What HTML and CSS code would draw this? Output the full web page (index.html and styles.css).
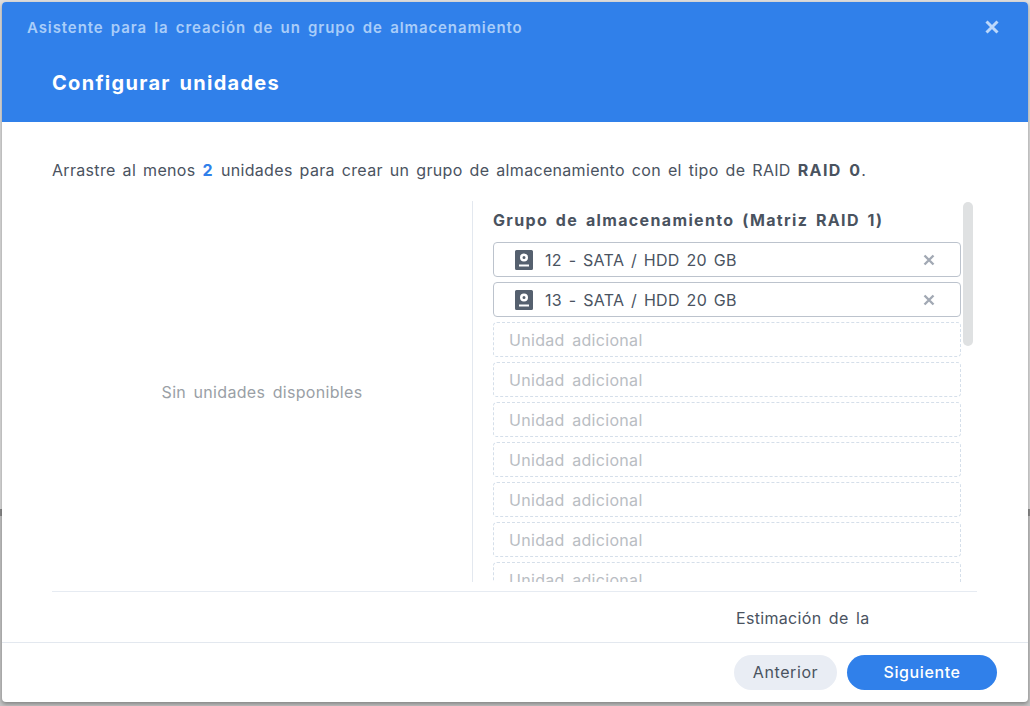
FILE: index.html
```html
<!DOCTYPE html>
<html lang="es">
<head>
<meta charset="utf-8">
<title>Asistente</title>
<link rel="stylesheet" href="styles.css">
</head>
<body>
<div class="dialog">
  <header class="head">
    <div class="top">
      <span class="wizard">Asistente para la creación de un grupo de almacenamiento</span>
      <svg class="close" width="14" height="14" viewBox="0 0 14 14"><path d="M1.5 1.5l11 11M12.5 1.5l-11 11" stroke="currentColor" stroke-width="3" fill="none"/></svg>
    </div>
    <h1 class="title">Configurar unidades</h1>
  </header>
  <main class="body">
    <p class="intro">Arrastre al menos <b class="num">2</b> unidades para crear un grupo de almacenamiento con el tipo de RAID <b>RAID 0</b>.</p>
    <div class="columns">
      <div class="avail">Sin unidades disponibles</div>
      <div class="group">
        <div class="scroll">
          <h2 class="gtitle">Grupo de almacenamiento (Matriz RAID 1)</h2>
          <div class="drive">
            <svg class="hdd" width="18" height="20" viewBox="0 0 18 20"><path fill-rule="evenodd" d="M1.5 0h15A1.5 1.5 0 0 1 18 1.500v17a1.500 1.500 0 0 1-1.500 1.500h-15A1.500 1.500 0 0 1 0 18.500v-17A1.500 1.500 0 0 1 1.500 0zM9 3.500a4 4 0 1 0 0 8 4 4 0 0 0 0-8zM9 6a1.500 1.500 0 1 1 0 3 1.500 1.500 0 0 1 0-3zM4 14.500v2h10v-2z"/></svg>
            <span class="dname">12 - SATA / HDD 20 GB</span>
            <svg class="rm" width="12" height="12" viewBox="0 0 12 12"><path d="M1.500 1.500l9 9M10.500 1.500l-9 9" stroke="currentColor" stroke-width="2.400" fill="none"/></svg>
          </div>
          <div class="drive">
            <svg class="hdd" width="18" height="20" viewBox="0 0 18 20"><path fill-rule="evenodd" d="M1.5 0h15A1.5 1.5 0 0 1 18 1.500v17a1.500 1.500 0 0 1-1.500 1.500h-15A1.500 1.500 0 0 1 0 18.500v-17A1.500 1.500 0 0 1 1.500 0zM9 3.500a4 4 0 1 0 0 8 4 4 0 0 0 0-8zM9 6a1.500 1.500 0 1 1 0 3 1.500 1.500 0 0 1 0-3zM4 14.500v2h10v-2z"/></svg>
            <span class="dname">13 - SATA / HDD 20 GB</span>
            <svg class="rm" width="12" height="12" viewBox="0 0 12 12"><path d="M1.500 1.500l9 9M10.500 1.500l-9 9" stroke="currentColor" stroke-width="2.400" fill="none"/></svg>
          </div>
          <div class="slot">Unidad adicional</div>
          <div class="slot">Unidad adicional</div>
          <div class="slot">Unidad adicional</div>
          <div class="slot">Unidad adicional</div>
          <div class="slot">Unidad adicional</div>
          <div class="slot">Unidad adicional</div>
          <div class="slot">Unidad adicional</div>
        </div>
        <div class="thumb"></div>
      </div>
    </div>
    <div class="estimate"><span class="est">Estimación de la</span></div>
  </main>
  <footer class="foot">
    <button class="btn prev">Anterior</button>
    <button class="btn next">Siguiente</button>
  </footer>
</div>
</body>
</html>
```
FILE: styles.css
```css
* { box-sizing: border-box; }
html, body { height: 100%; }
body {
  margin: 0;
  height: 706px;
  overflow: hidden;
  background: linear-gradient(#dedede 0 509px, #8c8c8c 509px 516px, #c4c4c4 516px);
  padding: 2px 2px 4px 2px;
  font-family: Inter, sans-serif;
  color: #4a535f;
  font-size: 16px;
  letter-spacing: .32px;
  word-spacing: 2.6px;
}
.dialog {
  height: 700px;
  background: #fff;
  border-radius: 4px;
  display: flex;
  flex-direction: column;
  overflow: hidden;
  box-shadow: 0 2px 4px rgba(0,0,0,.35);
}
.head {
  height: 120px;
  flex: none;
  background: #3080ea;
  color: #fff;
  padding: 0 29px 0 25px;
}
.top {
  height: 50px;
  display: flex;
  align-items: center;
  justify-content: space-between;
}
.wizard {
  font-size: 15px;
  font-weight: 600;
  color: #a9cdf9;
  letter-spacing: .9px;
}
.close { color: #bcd8fb; }
.title {
  margin: 0 0 0 25px;
  font-size: 20px;
  font-weight: 700;
  line-height: 62px;
  letter-spacing: 1.3px;
}
.body {
  flex: 1;
  min-height: 0;
  padding: 0 51px 0 50px;
  display: flex;
  flex-direction: column;
}
.intro {
  margin: 36px 0 0;
  line-height: 24px;
  height: 24px;
  white-space: nowrap;
  word-spacing: 2.15px;
}
.intro b { letter-spacing: 1.4px; }
.num { color: #3080ea; }
.columns {
  flex: none;
  height: 381px;
  margin-top: 19px;
  display: flex;
}
.avail {
  width: 421px;
  flex: none;
  border-right: 1px solid #e3e8ef;
  display: flex;
  align-items: center;
  justify-content: center;
  color: #9a9fa6;
}
.group {
  flex: 1;
  display: flex;
  min-width: 0;
  padding-left: 20px;
  position: relative;
}
.scroll {
  width: 468px;
  height: 381px;
  overflow: hidden;
}
.gtitle {
  margin: 7px 0 0;
  font-size: 16px;
  font-weight: 700;
  line-height: 24px;
  letter-spacing: 1.35px;
}
.drive, .slot {
  height: 35px;
  margin-top: 5px;
  border-radius: 4px;
  display: flex;
  align-items: center;
}
.gtitle + .drive { margin-top: 10px; }
.drive {
  border: 1px solid #bcc3cd;
  padding: 0 25px 0 21px;
}
.hdd { color: #55606e; fill: currentColor; flex: none; }
.dname { margin-left: 12px; flex: 1; word-spacing: 1.9px; }
.rm { color: #a2a9b4; flex: none; }
.slot {
  border: 1px dashed #d5dfea;
  padding-left: 15px;
  color: #b9bdc3;
}
.thumb {
  position: absolute;
  left: 490px;
  top: 1px;
  width: 10px;
  height: 144px;
  background: #dfe1e2;
  border-radius: 5px;
}
.estimate {
  border-top: 1px solid #e6ebf2;
  margin-top: 9px;
  padding: 14px 0 0 684px;
  height: 50px;
  line-height: 24px;
}
.foot {
  height: 60px;
  flex: none;
  border-top: 1px solid #e3e8ef;
  display: flex;
  justify-content: flex-end;
  align-items: flex-start;
  gap: 10px;
  padding: 12px 31px 0 0;
}
.btn {
  height: 35px;
  border: 0;
  border-radius: 18px;
  font: inherit;
  line-height: 35px;
  padding: 0;
  letter-spacing: .6px;
}
.prev { width: 103px; background: #e9edf4; color: #4a535f; }
.next { width: 150px; background: #3080ea; color: #fff; font-weight: 500; }
```
